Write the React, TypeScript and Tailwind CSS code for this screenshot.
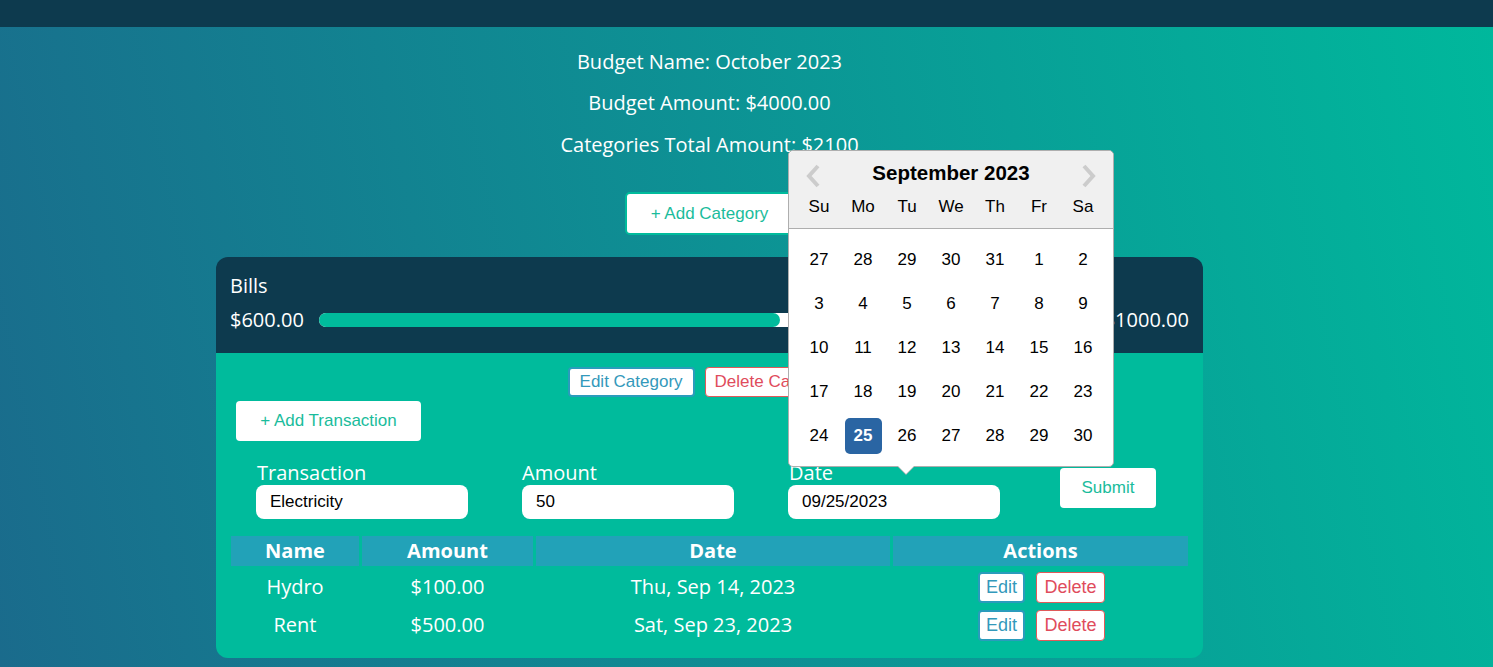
import React from "react";

const weeks = [
  [27, 28, 29, 30, 31, 1, 2],
  [3, 4, 5, 6, 7, 8, 9],
  [10, 11, 12, 13, 14, 15, 16],
  [17, 18, 19, 20, 21, 22, 23],
  [24, 25, 26, 27, 28, 29, 30],
];
const dayNames = ["Su", "Mo", "Tu", "We", "Th", "Fr", "Sa"];

function Calendar() {
  return (
    <div className="absolute left-0 bottom-[52px] w-[326px] z-10 rounded-[5px] border border-[#aeaeae] bg-white font-['Liberation_Sans',Arial,sans-serif] text-black">
      <div className="rounded-t-[5px] bg-[#f0f0f0] border-b border-[#aeaeae] pt-[8px] pb-[10px] relative">
        <div className="text-center text-[20.5px] font-bold leading-[28px]">September 2023</div>
        <svg className="absolute left-[15px] top-[13px]" width="18" height="24" viewBox="0 0 18 24">
          <path d="M14 2 L5 12 L14 22" fill="none" stroke="#cccccc" strokeWidth="4" />
        </svg>
        <svg className="absolute right-[15px] top-[13px]" width="18" height="24" viewBox="0 0 18 24">
          <path d="M4 2 L13 12 L4 22" fill="none" stroke="#cccccc" strokeWidth="4" />
        </svg>
        <div className="grid grid-cols-7 px-[8px] mt-[9px]">
          {dayNames.map((d) => (
            <div key={d} className="text-center text-[17px] leading-[22px]">{d}</div>
          ))}
        </div>
      </div>
      <div className="px-[8px] pt-[9px] pb-[8px]">
        {weeks.map((w, i) => (
          <div key={i} className="grid grid-cols-7 h-[44px] items-center">
            {w.map((d, j) => {
              const sel = i === 4 && j === 1;
              return (
                <div key={j} className="flex justify-center">
                  <div
                    className={
                      sel
                        ? "w-[37px] h-[36px] rounded-[5px] bg-[#2a65a3] text-white font-bold flex items-center justify-center text-[17px]"
                        : "w-[37px] h-[36px] flex items-center justify-center text-[17px]"
                    }
                  >
                    {d}
                  </div>
                </div>
              );
            })}
          </div>
        ))}
      </div>
      <div className="absolute left-[108px] -bottom-[9px] w-0 h-0 border-l-[9px] border-r-[9px] border-t-[9px] border-l-transparent border-r-transparent border-t-[#aeaeae]" />
      <div className="absolute left-[109px] -bottom-[8px] w-0 h-0 border-l-[8px] border-r-[8px] border-t-[8px] border-l-transparent border-r-transparent border-t-white" />
    </div>
  );
}

const arial = "font-['Liberation_Sans',Arial,sans-serif]";

export default function App() {
  return (
    <div className="min-h-screen bg-[linear-gradient(78deg,#1a6b8c,#00b89c)] font-['Open_Sans',sans-serif] text-white">
      <div className="h-[27px] bg-[#0d3a4e]" />
      <div className="flex flex-col items-center pr-[74px]">
        <p className="mt-[21px] text-[20px] leading-[28px]">Budget Name: October 2023</p>
        <p className="mt-[13px] text-[20px] leading-[28px]">Budget Amount: $4000.00</p>
        <p className="mt-[14px] text-[20px] leading-[28px]">Categories Total Amount: $2100</p>
        <button className={`mt-[33px] h-[43px] w-[169px] rounded-[5px] border-2 border-[#00bb9c] bg-white text-[17px] text-[#1abc9c] ${arial}`}>
          + Add Category
        </button>

        <div className="mt-[22px] w-[987px] rounded-[12px] overflow-visible">
          <div className="rounded-t-[12px] bg-[#0d3a4e] h-[96px] px-[14px] pt-[16px]">
            <div className="text-[20px] leading-[26px]">Bills</div>
            <div className="flex items-center mt-[8px] gap-[15px]">
              <span className="text-[20px] leading-[26px]">$600.00</span>
              <div className="flex-1 h-[14px] rounded-full bg-white">
                <div className="h-full rounded-full bg-[#00bb9c]" style={{ width: "59.9%" }} />
              </div>
              <span className="text-[20px] leading-[26px]">$1000.00</span>
            </div>
          </div>
          <div className="rounded-b-[12px] bg-[#00bb9c] px-[15px] pb-[14px]">
            <div className={`flex justify-center gap-[10px] pt-[14px] pr-[4px] ${arial}`}>
              <button className="h-[30px] px-[10px] rounded-[4px] border-2 border-[#2a9cbc] bg-white text-[17px] text-[#3399bb]">
                Edit Category
              </button>
              <button className="h-[30px] px-[9px] rounded-[4px] border border-[#e05a5a] bg-white text-[17px] text-[#e04c5c]">
                Delete Category
              </button>
            </div>
            <button className={`ml-[5px] mt-[4px] h-[40px] w-[185px] rounded-[4px] bg-white text-[17px] text-[#1abc9c] ${arial}`}>
              + Add Transaction
            </button>
            <div className="flex items-center pl-[25px] mt-[20px]">
              <div className="flex flex-col w-[212px]">
                <label className="text-[20px] leading-[24px] pl-[1px]">Transaction</label>
                <div className={`h-[34px] rounded-[8px] bg-white text-black text-[17px] flex items-center px-[14px] ${arial}`}>Electricity</div>
              </div>
              <div className="flex flex-col w-[212px] ml-[54px]">
                <label className="text-[20px] leading-[24px]">Amount</label>
                <div className={`h-[34px] rounded-[8px] bg-white text-black text-[17px] flex items-center px-[14px] ${arial}`}>50</div>
              </div>
              <div className="relative flex flex-col w-[212px] ml-[54px]">
                <label className="text-[20px] leading-[24px] pl-[1px]">Date</label>
                <div className={`h-[34px] rounded-[8px] bg-white text-black text-[17px] flex items-center px-[14px] ${arial}`}>09/25/2023</div>
                <Calendar />
              </div>
              <button className={`ml-[60px] -mt-[4px] h-[40px] w-[96px] rounded-[4px] bg-white text-[17px] text-[#1abc9c] ${arial}`}>
                Submit
              </button>
            </div>
            <div className="mt-[17px] grid grid-cols-[128px_171px_354px_295px] gap-x-[3px] text-[20px]">
              {["Name", "Amount", "Date", "Actions"].map((h) => (
                <div key={h} className="h-[30px] bg-[#22a2b8] flex items-center justify-center font-bold">{h}</div>
              ))}
              {[
                ["Hydro", "$100.00", "Thu, Sep 14, 2023"],
                ["Rent", "$500.00", "Sat, Sep 23, 2023"],
              ].map((r, i) => (
                <React.Fragment key={i}>
                  {r.map((c, j) => (
                    <div key={j} className={`h-[38px] flex items-center justify-center ${i === 0 ? "mt-[2px]" : ""}`}>{c}</div>
                  ))}
                  <div className={`h-[38px] flex items-center justify-center gap-[11px] pl-[2px] ${i === 0 ? "mt-[2px]" : ""} ${arial}`}>
                    <button className="h-[31px] w-[47px] rounded-[4px] border-2 border-[#2a9cbc] bg-white text-[18px] text-[#3399bb]">Edit</button>
                    <button className="h-[31px] w-[69px] rounded-[4px] border border-[#e05a5a] bg-white text-[18px] text-[#e04c5c]">Delete</button>
                  </div>
                </React.Fragment>
              ))}
            </div>
          </div>
        </div>
      </div>
    </div>
  );
}
